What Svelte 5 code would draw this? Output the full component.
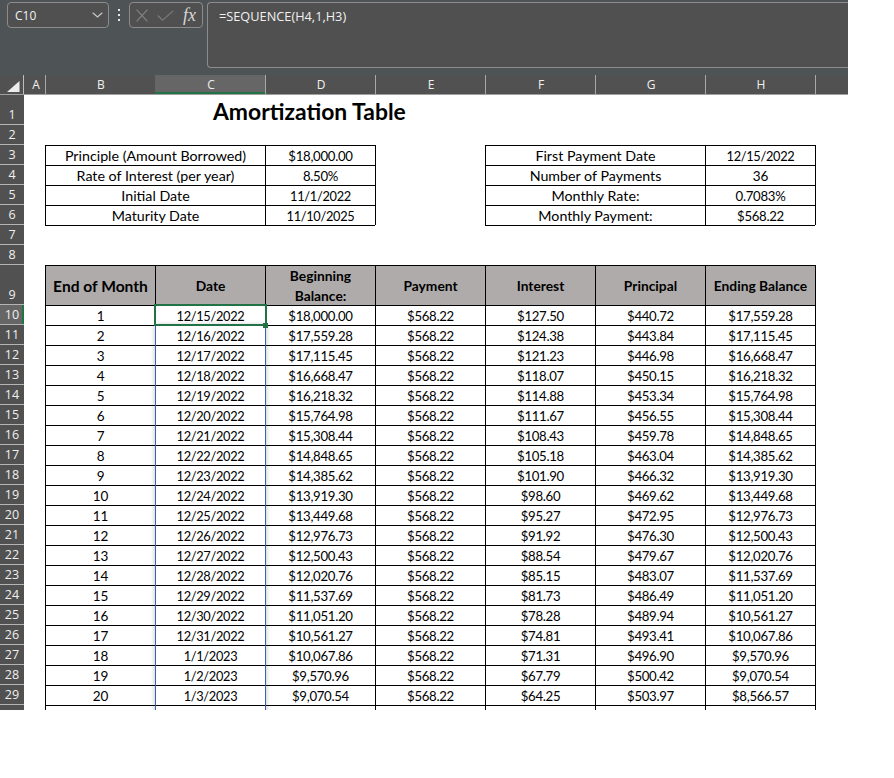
<script>
  const columns = ['A', 'B', 'C', 'D', 'E', 'F', 'G', 'H', ''];
  const dates = ['12/15/2022','12/16/2022','12/17/2022','12/18/2022','12/19/2022','12/20/2022','12/21/2022','12/22/2022','12/23/2022','12/24/2022','12/25/2022','12/26/2022','12/27/2022','12/28/2022','12/29/2022','12/30/2022','12/31/2022','1/1/2023','1/2/2023','1/3/2023'];
  const begin = ['$18,000.00','$17,559.28','$17,115.45','$16,668.47','$16,218.32','$15,764.98','$15,308.44','$14,848.65','$14,385.62','$13,919.30','$13,449.68','$12,976.73','$12,500.43','$12,020.76','$11,537.69','$11,051.20','$10,561.27','$10,067.86','$9,570.96','$9,070.54'];
  const interest = ['$127.50','$124.38','$121.23','$118.07','$114.88','$111.67','$108.43','$105.18','$101.90','$98.60','$95.27','$91.92','$88.54','$85.15','$81.73','$78.28','$74.81','$71.31','$67.79','$64.25'];
  const principal = ['$440.72','$443.84','$446.98','$450.15','$453.34','$456.55','$459.78','$463.04','$466.32','$469.62','$472.95','$476.30','$479.67','$483.07','$486.49','$489.94','$493.41','$496.90','$500.42','$503.97'];
  const ending = ['$17,559.28','$17,115.45','$16,668.47','$16,218.32','$15,764.98','$15,308.44','$14,848.65','$14,385.62','$13,919.30','$13,449.68','$12,976.73','$12,500.43','$12,020.76','$11,537.69','$11,051.20','$10,561.27','$10,067.86','$9,570.96','$9,070.54','$8,566.57'];

  const empty = (n = 9) => Array.from({ length: n }, () => ({ t: '' }));
  const box = (t, extra = {}) => ({ t, cls: 'box', ...extra });
  const kind = (t) => (/^[\d/]+\/[\d/]+$/.test(t) ? 'date' : /^\$|%$/.test(t) ? 'num' : /^\d+$/.test(t) ? 'int' : '');

  const infoRow = (l, lv, r, rv) => [
    { t: '' }, box(l, { span: 2 }), box(lv), { t: '', cls: 'left' },
    box(r, { span: 2 }), box(rv), { t: '', cls: 'left' }
  ];

  const rows = [
    { n: 1, cls: 'tall', cells: [{ t: '' }, { t: '' }, { t: 'Amortization Table', cls: 'title' }, ...empty(6)] },
    { n: 2, cells: empty() },
    { n: 3, cells: infoRow('Principle (Amount Borrowed)', '$18,000.00', 'First Payment Date', '12/15/2022') },
    { n: 4, cells: infoRow('Rate of Interest (per year)', '8.50%', 'Number of Payments', '36') },
    { n: 5, cells: infoRow('Initial Date', '11/1/2022', 'Monthly Rate:', '0.7083%') },
    { n: 6, cells: infoRow('Maturity Date', '11/10/2025', 'Monthly Payment:', '$568.22') },
    { n: 7, cells: [{ t: '' }, { t: '', cls: 'top', span: 2 }, { t: '', cls: 'top' }, { t: '' }, { t: '', cls: 'top', span: 2 }, { t: '', cls: 'top' }, { t: '' }] },
    { n: 8, cells: empty() },
    {
      n: 9, cls: 'head',
      cells: [
        { t: '' },
        box('End of Month', { hd: 'big' }), box('Date', { hd: 'sm' }), box('Beginning Balance:', { hd: 'sm wrap' }),
        box('Payment', { hd: 'sm' }), box('Interest', { hd: 'sm' }), box('Principal', { hd: 'sm' }), box('Ending Balance', { hd: 'sm' }),
        { t: '', cls: 'left' }
      ]
    },
    ...dates.map((d, i) => ({
      n: 10 + i,
      active: i === 0,
      cells: [
        { t: '' }, box(String(i + 1)), box(d), box(begin[i]), box('$568.22'),
        box(interest[i]), box(principal[i]), box(ending[i]), { t: '', cls: 'left' }
      ]
    })),
    {
      n: '', cells: [{ t: '' }, ...Array.from({ length: 7 }, () => box('')), { t: '', cls: 'left' }]
    }
  ];
</script>

<div class="app">
  <div class="ribbon">
    <div class="namebox">
      <span class="cellref">C10</span>
      <svg class="chev" width="11" height="6" viewBox="0 0 11 6"><path d="M.7.7 5.5 5 10.3.7" fill="none" stroke="#c8c8c8" stroke-width="1.2"/></svg>
    </div>
    <div class="dots"><i></i><i></i><i></i></div>
    <div class="fxbox">
      <svg width="12" height="13" viewBox="0 0 12 13"><path d="M.6.6 11.4 12.4M11.4.6.6 12.4" stroke="#858585" stroke-width="1.1"/></svg>
      <svg width="17" height="11" viewBox="0 0 17 11"><path d="M.8 5.5 5.5 10.2 16.2.8" fill="none" stroke="#7d7d7d" stroke-width="1.1"/></svg>
      <span class="fx">fx</span>
    </div>
    <div class="formula">=SEQUENCE(H4,1,H3)</div>
  </div>

  <div class="colhead">
    <div class="corner"><svg width="13" height="11" viewBox="0 0 13 11"><path d="M12.5 0V11H0Z" fill="#ececec"/></svg></div>
    {#each columns as c}
      <div class="colcell" class:sel={c === 'C'}>{c}</div>
    {/each}
  </div>

  <div class="sheet">
    {#each rows as r}
      <div class="row {r.cls ?? ''}">
        <div class="rowhead" class:rowsel={r.active}><span>{r.n}</span></div>
        {#each r.cells as c}
          <div class="cell {c.cls ?? ''} {c.hd ?? ''} {kind(c.t)}" class:hd={c.hd} class:span2={c.span === 2}>{c.t}</div>
        {/each}
      </div>
    {/each}
    <div class="spill"></div>
    <div class="active"><b></b></div>
  </div>
</div>

<style>
  :global(body) { margin: 0; background: #fff; }
  .app { width: 848px; font-family: "Lato", "Liberation Sans", sans-serif; color: #000; }

  .ribbon { height: 75px; box-sizing: border-box; background: #4e5356; display: flex; align-items: flex-start; padding: 2px 0 0 7px; color: #f0f0f0; font-family: "Open Sans", sans-serif; font-size: 12px; }
  .namebox { width: 102px; height: 26px; box-sizing: border-box; border: 1px solid #8c8c8c; border-radius: 4px; background: #505050; display: flex; align-items: center; justify-content: space-between; padding: 0 5px 0 7px; }
  .dots { width: 20px; height: 26px; display: flex; flex-direction: column; align-items: center; justify-content: center; gap: 3px; }
  .dots i { width: 2px; height: 2px; background: #e6e6e6; }
  .fxbox { width: 74px; height: 26px; box-sizing: border-box; border: 1px solid #8c8c8c; border-radius: 4px; background: #505050; display: flex; align-items: center; gap: 9px; padding: 0 4px 0 6px; }
  .fx { font-family: "Liberation Serif", serif; font-style: italic; font-size: 18px; color: #d8d8d8; }
  .formula { flex: 1; height: 66px; box-sizing: border-box; margin-left: 4px; border: 1px solid #8c8c8c; border-right: none; border-radius: 4px 0 0 4px; background: #505050; padding: 4px 0 0 11px; line-height: 18px; font-size: 12.75px; }

  .colhead { height: 20px; box-sizing: border-box; display: grid; grid-template-columns: 25px 20px repeat(7, 110px) 33px; background: #515151; border-bottom: 1px solid #a0a0a0; font-family: "Open Sans", sans-serif; font-size: 12px; color: #f0f0f0; }
  .corner { display: flex; align-items: flex-end; justify-content: flex-end; padding: 0 3px 2px 0; border-right: 1px solid #bdbdbd; margin-right: -1px; width: 24px; box-sizing: border-box; }
  .colcell { display: flex; align-items: center; justify-content: center; border-right: 1px solid #a8a8a8; height: 19px; box-sizing: border-box; padding-left: 2px; margin-right: -1px; }
  .colcell:last-child { border-right: none; margin-right: 0; }
  .colcell.sel { background: #666; box-shadow: inset 0 -2px 0 #217346; }

  .sheet { position: relative; height: 615px; overflow: hidden; background: #fff; }
  .row { display: grid; grid-template-columns: 25px 20px repeat(7, 110px) 33px; grid-template-rows: minmax(0, 1fr); height: 20px; }
  .row.tall { height: 30px; }
  .row.head { height: 40px; }
  .rowhead { width: 24px; box-sizing: border-box; background: #515151; border-bottom: 1px solid #b4b4b4; display: flex; align-items: flex-end; justify-content: center; color: #f0f0f0; font-family: "Open Sans", sans-serif; font-size: 12.5px; line-height: 18px; }
  .rowsel { background: #666; box-shadow: inset -2px 0 0 #217346; }

  .cell { box-sizing: border-box; font-size: 14.25px; line-height: 20px; text-align: center; white-space: nowrap; min-width: 0; }
  .box { border-left: 1px solid #000; border-top: 1px solid #000; line-height: 19px; }
  .date { font-size: 12.8px; letter-spacing: -0.3px; line-height: 21px; }
  .num { font-size: 13.2px; letter-spacing: -0.3px; line-height: 21px; }
  .int { font-size: 13.5px; letter-spacing: -0.2px; line-height: 21px; }
  .span2 { grid-column: span 2; }
  .left { border-left: 1px solid #000; }
  .top { border-top: 1px solid #000; }
  .title { font-size: 22.9px; font-weight: 700; line-height: 32px; text-align: left; padding-left: 58px; overflow: visible; }
  .hd { background: #afabab; font-weight: 700; display: flex; align-items: center; justify-content: center; line-height: 20px; }
  .big { font-size: 15.6px; }
  .sm { font-size: 13.8px; }
  .wrap { white-space: normal; padding: 0 16px; }

  .spill { position: absolute; left: 155px; top: 230px; width: 109px; height: 400px; border-left: 1px solid #3a62a8; border-right: 1px solid #3a62a8; box-shadow: 0 0 5px rgba(0, 0, 0, 0.25); }
  .active { position: absolute; left: 154px; top: 209px; width: 113px; height: 22px; box-sizing: border-box; border: 2px solid #217346; }
  .active b { position: absolute; right: -3px; bottom: -4px; width: 5px; height: 5px; background: #217346; }
</style>
